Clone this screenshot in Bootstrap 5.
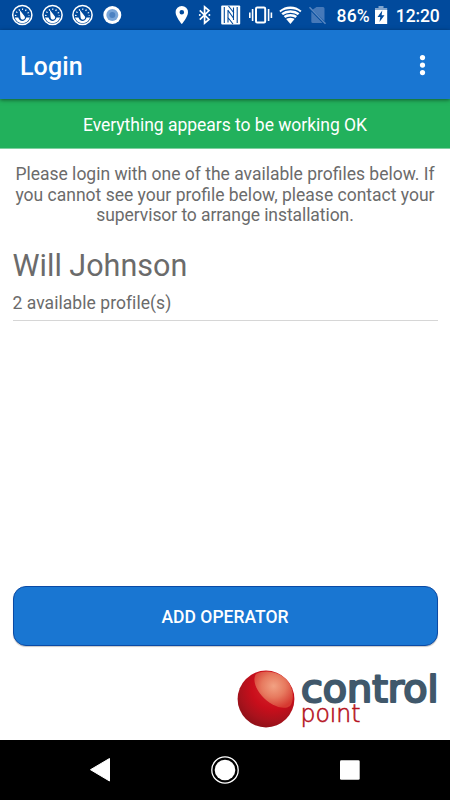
<!DOCTYPE html>
<html lang="en">
<head>
<meta charset="utf-8">
<meta name="viewport" content="width=device-width, initial-scale=1">
<title>Login</title>
<link href="https://cdn.jsdelivr.net/npm/bootstrap@5.3.0/dist/css/bootstrap.min.css" rel="stylesheet">
<style>
body{font-family:Roboto,"Liberation Sans",sans-serif;font-size:17.5px;line-height:20.5px;color:#6b6b6b;height:800px;overflow:hidden}
.status-bar{height:30px;background:#014a9c;flex:none}
.status-bar svg{display:block;width:450px;height:30px}
.app-bar{height:69px;background:#1976d2;flex:none;padding:4px 19px 0 20px;box-shadow:0 1px 4px rgba(0,0,0,.5);z-index:1}
.app-title{font-size:25px;line-height:30px;font-weight:500;letter-spacing:.1px}
.ok-banner{height:50px;background:#22b15c;flex:none;padding-top:4px;border-bottom:1px solid #7ed09f;letter-spacing:-.02px}
.intro{padding:15px 10px 0;height:90px}
.intro-end{letter-spacing:-.07px}
.profile-row{margin:0 12.5px;padding-top:9px;height:82px;border-bottom:1px solid #d6d6d6}
.profile-name{font-size:30.5px;line-height:36px}
.profile-count{margin-top:9px;letter-spacing:.05px}
.btn-operator{height:60px;margin:0 12.5px 1px;border:1px solid #0a4aa5;border-radius:13px;background:#1976d2;font-weight:500;font-size:17.5px;box-shadow:0 1px 1px rgba(0,0,0,.22);padding-top:8px}
.brand-row{height:93px;flex:none}
.brand-row svg{display:block}
.nav-keys{height:60px;flex:none}
.nav-keys svg{display:block}
</style>
<script src="https://cdn.jsdelivr.net/npm/bootstrap@5.3.0/dist/js/bootstrap.bundle.min.js"></script>
</head>
<body class="d-flex flex-column bg-white">
<div class="status-bar">
<svg viewBox="0 0 450 30" fill="#fff">
  <defs>
    <g id="gauge">
      <circle r="9.6" fill="none" stroke="#fff" stroke-width="1.5"/>
      <path d="M-6.7 1A6.7 6.7 0 1 1 6.7 1" fill="none" stroke="#fff" stroke-width="1.5" stroke-dasharray="1.1 2.3"/>
      <path d="M-7.6 2.6H-4Q-3 6 0 6T4 2.6H7.600Q5.500 8.200 0 8.200T-7.600 2.600Z"/>
      <path d="M-2.600-5L2.100.900A2.300 2.300 0 1 1-1.900 2.300Z"/>
    </g>
  </defs>
  <use href="#gauge" x="22.3" y="15"/><use href="#gauge" x="52.5" y="15"/><use href="#gauge" x="82.5" y="15"/>
  <circle cx="112.3" cy="15" r="9"/><circle cx="112.3" cy="15" r="6" fill="#78a5d8"/><circle cx="112.3" cy="15" r="3" fill="#4c82c2"/>
  <path fill-rule="evenodd" d="M181.8 6A6.2 6.2 0 0 0 175.6 12.2C175.6 17 181.8 24 181.8 24S188 17 188 12.2A6.2 6.2 0 0 0 181.8 6ZM181.8 9.9A2.3 2.3 0 1 1 181.8 14.5A2.3 2.3 0 0 1 181.8 9.9Z"/>
  <path d="M199.800 10.300L209 19.400L204.600 23.200V6.800L209 10.600L199.800 19.700" fill="none" stroke="#fff" stroke-width="1.700"/>
  <circle cx="199.800" cy="15" r="1"/><circle cx="209.400" cy="15" r="1"/>
  <rect x="221.200" y="5.500" width="19" height="19" rx="1"/>
  <path d="M224.300 7V23M237.200 7V23M228 10V22.500M233.500 7.500V20M227.800 10L233.700 18.500M228.500 6L234 13M227.500 17L233 24" fill="none" stroke="#014a9c" stroke-width="1.100"/>
  <rect x="256" y="7.5" width="9.2" height="15" rx="1.2" fill="none" stroke="#fff" stroke-width="2"/>
  <path d="M252.6 9V21M268.6 9V21M249.8 12.5V18M271.4 12.5V18" stroke="#fff" stroke-width="1.6"/>
  <path d="M279.3 10.7Q284.3 6.4 290.4 6.4T301.5 10.7L290.4 24Z"/>
  <path d="M280.5 12.9Q285 9.7 290.4 9.7T300.3 12.9M282.5 15.9Q286.2 13.4 290.4 13.4T298.3 15.9M285 18.8Q287.5 17.1 290.4 17.1T295.8 18.8" fill="none" stroke="#014a9c" stroke-width="1.2"/>
  <path d="M316.5 7H323Q324.5 7 324.5 8.5V21L312.5 9.7ZM311.3 11.6L322.5 23H312.8Q311.3 23 311.3 21.5Z" fill="#4679b9"/>
  <path d="M309.5 7.2L325.5 23.7" stroke="#5a88c1" stroke-width="1.5"/>
  <g font-family="Roboto,sans-serif" font-size="17.5" font-weight="500"><text x="336.6" y="21.7" textLength="33">86%</text><text x="395.8" y="21.7" textLength="44">12:20</text></g>
  <path d="M378.5 6H383.5V8H387.2V11H375V8H378.5Z" fill="#80a4cd"/>
  <path d="M375 10H387.2V24H375Z"/>
  <path d="M382.3 10.5L377.5 17H380.3L379.5 22L384.5 15.2H381.6Z" fill="#014a9c"/>
</svg>
</div>
<header class="app-bar d-flex align-items-center justify-content-between position-relative text-white">
  <h1 class="app-title m-0">Login</h1>
  <svg width="16" height="24" viewBox="0 0 16 24" fill="#fff"><circle cx="7.5" cy="2.6" r="2.6"/><circle cx="7.5" cy="10.1" r="2.6"/><circle cx="7.5" cy="17.6" r="2.6"/></svg>
</header>
<div class="ok-banner d-flex align-items-center justify-content-center text-white">Everything appears to be working OK</div>
<main class="d-flex flex-column flex-grow-1">
  <p class="intro text-center m-0">Please login with one of the available profiles below. If<br>you cannot see your profile below, please contact your<br><span class="intro-end">supervisor to arrange installation.</span></p>
  <section class="profile-row">
    <div class="profile-name">Will Johnson</div>
    <div class="profile-count">2 available profile(s)</div>
  </section>
  <button class="btn btn-primary btn-operator text-uppercase mt-auto">Add operator</button>
</main>
<div class="brand-row d-flex justify-content-end">
<svg width="225" height="93" viewBox="225 647 225 93" role="img" aria-label="control point">
  <defs>
    <radialGradient id="ball" cx=".62" cy=".3" r=".75"><stop offset="0" stop-color="#d8282c"/><stop offset=".5" stop-color="#c90e1b"/><stop offset=".78" stop-color="#a9121c"/><stop offset="1" stop-color="#8d1018"/></radialGradient>
    <radialGradient id="shine" cx=".5" cy=".4" r=".62"><stop offset="0" stop-color="#f2a283"/><stop offset=".5" stop-color="#e77a5f"/><stop offset="1" stop-color="#d63a31"/></radialGradient>
  </defs>
  <circle cx="266" cy="699" r="28.4" fill="url(#ball)"/>
  <path d="M256 674C266 669 281 672 288.500 682C294 690 294 701 290 706C283 711 270 705 262 696C254 687 253 678 256 674Z" fill="url(#shine)"/>
  <text x="301" y="701.500" font-family="DejaVu Sans" font-size="37.500" textLength="137.500" lengthAdjust="spacingAndGlyphs" fill="#40586b" stroke="#40586b" stroke-width="2.200" stroke-linejoin="round">control</text>
  <text x="300.500" y="722" font-family="DejaVu Sans" font-weight="200" font-size="24" textLength="60" lengthAdjust="spacingAndGlyphs" fill="#b5121d" stroke="#b5121d" stroke-width=".6">poınt</text>
</svg>
</div>
<nav class="nav-keys bg-black">
<svg width="450" height="60" viewBox="0 740 450 60" fill="#fff">
  <path d="M90.500 769.700L109.500 758.500V781Z" stroke="#fff" stroke-width="1" stroke-linejoin="round"/>
  <circle cx="225" cy="770" r="10.300"/><circle cx="225" cy="770" r="13.200" fill="none" stroke="#fff" stroke-width="1.300"/>
  <rect x="340" y="760.200" width="19.700" height="19.500" rx="1.300"/>
</svg>
</nav>
</body>
</html>
